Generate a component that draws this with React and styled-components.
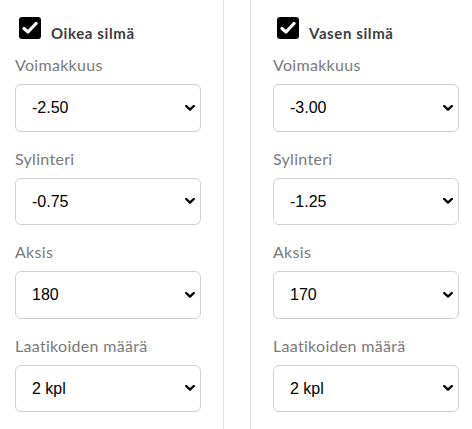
import React from 'react'
import styled, { createGlobalStyle } from 'styled-components'

const GlobalStyle = createGlobalStyle`
  html, body {
    margin:0;
    padding:0;
    background:#fff;
  }
  body {
    font-family: Lato, "Noto Sans", sans-serif;
  }
`

const eyes = [
  {
    title: 'Oikea silmä',
    fields: [
      { label: 'Voimakkuus', value: '-2.50' },
      { label: 'Sylinteri', value: '-0.75' },
      { label: 'Aksis', value: '180' },
      { label: 'Laatikoiden määrä', value: '2 kpl' },
    ],
  },
  {
    title: 'Vasen silmä',
    fields: [
      { label: 'Voimakkuus', value: '-3.00' },
      { label: 'Sylinteri', value: '-1.25' },
      { label: 'Aksis', value: '170' },
      { label: 'Laatikoiden määrä', value: '2 kpl' },
    ],
  },
]

function Chevron() {
  return (
    <svg width="10" height="6" viewBox="0 0 10 6">
      <polyline points="1.2,1 5,4.6 8.8,1" fill="none" stroke="#000" strokeWidth="2.4" strokeLinecap="round" strokeLinejoin="round" />
    </svg>
  )
}

function EyeColumn({ eye, side }) {
  return (
    <Column $side={side}>
      <Header>
        <CheckBox>
          <svg width="16" height="14" viewBox="0 0 16 14">
            <polyline points="2,7.5 6,11 14,2.5" fill="none" stroke="#fff" strokeWidth="3.2" strokeLinecap="round" strokeLinejoin="round" />
          </svg>
        </CheckBox>
        <Title>{eye.title}</Title>
      </Header>
      {eye.fields.map((f) => (
        <Field key={f.label}>
          <Label>{f.label}</Label>
          <SelectWrap>
            <Select defaultValue={f.value}>
              <option value={f.value}>{f.value}</option>
            </Select>
            <Arrow><Chevron /></Arrow>
          </SelectWrap>
        </Field>
      ))}
    </Column>
  )
}

export default function App() {
  return (
    <>
      <GlobalStyle />
      <Page>
        <EyeColumn eye={eyes[0]} side="left" />
        <EyeColumn eye={eyes[1]} side="right" />
      </Page>
    </>
  )
}

const Page = styled.div`
  display:flex;
  gap:26px;
  height:429px;
  overflow:hidden;
`
const Column = styled.section`
  box-sizing:border-box;
  height:100%;
  padding-top:17px;
  ${(p) => p.$side === 'left'
    ? `width:224px; padding-left:15px; padding-right:22px; border-right:1px solid #e2e2e2;`
    : `flex:1; padding-left:22px; padding-right:13px; border-left:1px solid #e2e2e2;`}
`
const Header = styled.div`
  display:flex;
  align-items:flex-start;
  gap:10px;
  height:22px;
  padding-left:4px;
  margin-bottom:14px;
`
const CheckBox = styled.span`
  width:22px;
  height:22px;
  border-radius:3px;
  background:#000;
  display:flex;
  align-items:center;
  justify-content:center;
  flex-shrink:0;
`
const Title = styled.span`
  font-weight:700;
  font-size:15px;
  line-height:22px;
  color:#3d3d3d;
  letter-spacing:0.6px;
  margin-top:5px;
`
const Field = styled.div`
  margin-bottom:15px;
`
const Label = styled.label`
  display:block;
  font-size:16px;
  line-height:24px;
  color:#7a7a7a;
  letter-spacing:0.3px;
  margin-bottom:7px;
`
const SelectWrap = styled.div`
  position:relative;
`
const Select = styled.select`
  appearance:none;
  -webkit-appearance:none;
  box-sizing:border-box;
  width:100%;
  height:47.5px;
  padding:0 30px 0 16px;
  border:1px solid #d0d0d0;
  border-radius:6px;
  background:#fff;
  font-family:"Liberation Sans", Arial, sans-serif;
  font-size:16px;
  color:#000;
  outline:none;
`
const Arrow = styled.span`
  position:absolute;
  right:6px;
  top:50%;
  transform:translateY(-50%);
  display:flex;
  pointer-events:none;
`
